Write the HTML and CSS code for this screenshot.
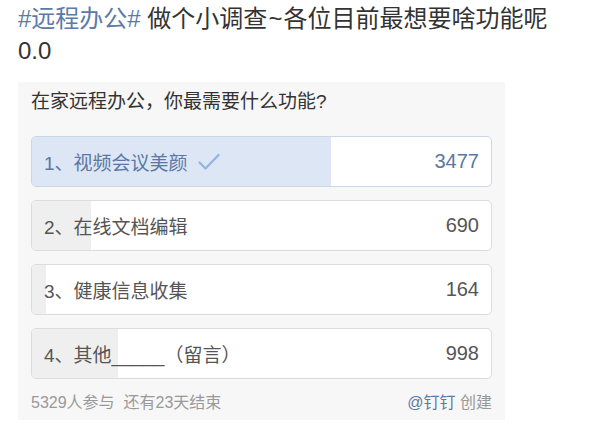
FILE: index.html
```html
<!DOCTYPE html>
<html lang="zh-CN">
<head>
    <meta charset="UTF-8">
    <meta name="viewport" content="width=device-width, initial-scale=1.0">
    <title>投票</title>
    <link rel="stylesheet" href="styles.css">
</head>
<body>
    <div class="post">
        <p class="post-text"><span class="topic">#远程办公#</span> 做个小调查<span class="tilde">~</span>各位目前最想要啥功能呢<br>0.0</p>

        <div class="poll">
            <div class="question">在家远程办公，你最需要什么功能?</div>

            <div class="option voted">
                <div class="fill" style="width: 65.2%;"></div>
                <span class="label">1、视频会议美颜
                    <svg class="check" width="22" height="18" viewBox="0 0 22 18"><path d="M1.5 9.5 L7.5 15.5 L20.5 2" fill="none" stroke="#92b4e2" stroke-width="2.2" stroke-linecap="round" stroke-linejoin="round"/></svg>
                </span>
                <span class="count">3477</span>
            </div>
            <div class="option">
                <div class="fill" style="width: 12.9%;"></div>
                <span class="label">2、在线文档编辑</span>
                <span class="count">690</span>
            </div>
            <div class="option">
                <div class="fill" style="width: 3.1%;"></div>
                <span class="label">3、健康信息收集</span>
                <span class="count">164</span>
            </div>
            <div class="option">
                <div class="fill" style="width: 18.7%;"></div>
                <span class="label">4、其他_____（留言）</span>
                <span class="count">998</span>
            </div>

            <div class="poll-footer">
                <span>5329人参与&nbsp;&nbsp;还有23天结束</span>
                <span><span class="author">@钉钉</span> 创建</span>
            </div>
        </div>
    </div>
</body>
</html>
```

FILE: styles.css
```css
body {
    margin: 0;
    background: #fff;
    font-family: "Liberation Sans", "Noto Sans CJK SC", sans-serif;
    color: #333;
}
.post {
    padding: 3px 0 0 18px;
    width: 487px;
}
.post-text {
    margin: 0;
    font-size: 24px;
    line-height: 32px;
    width: 570px;
    color: #333;
}
.topic {
    color: #5b7aa8;
}
.tilde {
    margin: 0 1px;
}
.poll {
    margin-top: 15px;
    background: #f7f7f7;
    padding: 0 13px 6px;
}
.question {
    font-size: 19px;
    line-height: 26px;
    padding: 7px 0 21px;
    color: #333;
}
.option {
    position: relative;
    display: flex;
    align-items: center;
    justify-content: space-between;
    height: 49px;
    margin-bottom: 13px;
    padding: 0 12px;
    background: #fff;
    border: 1px solid #dcdcdc;
    border-radius: 5px;
    overflow: hidden;
    font-size: 19px;
    color: #555;
}
.option .fill {
    position: absolute;
    left: 0;
    top: 0;
    bottom: 0;
    background: #efefef;
}
.option.voted {
    border-color: #c9d7eb;
    color: #5a77a5;
}
.option.voted .fill {
    background: #dce6f4;
}
.label, .count {
    position: relative;
}
.count {
    font-size: 20px;
}
.label {
    display: flex;
    align-items: center;
}
.check {
    margin-left: 10px;
}
.poll-footer {
    display: flex;
    justify-content: space-between;
    font-size: 16px;
    line-height: 22px;
    color: #999;
    margin-top: 7px;
}
.author {
    color: #5b7aa8;
}
```
